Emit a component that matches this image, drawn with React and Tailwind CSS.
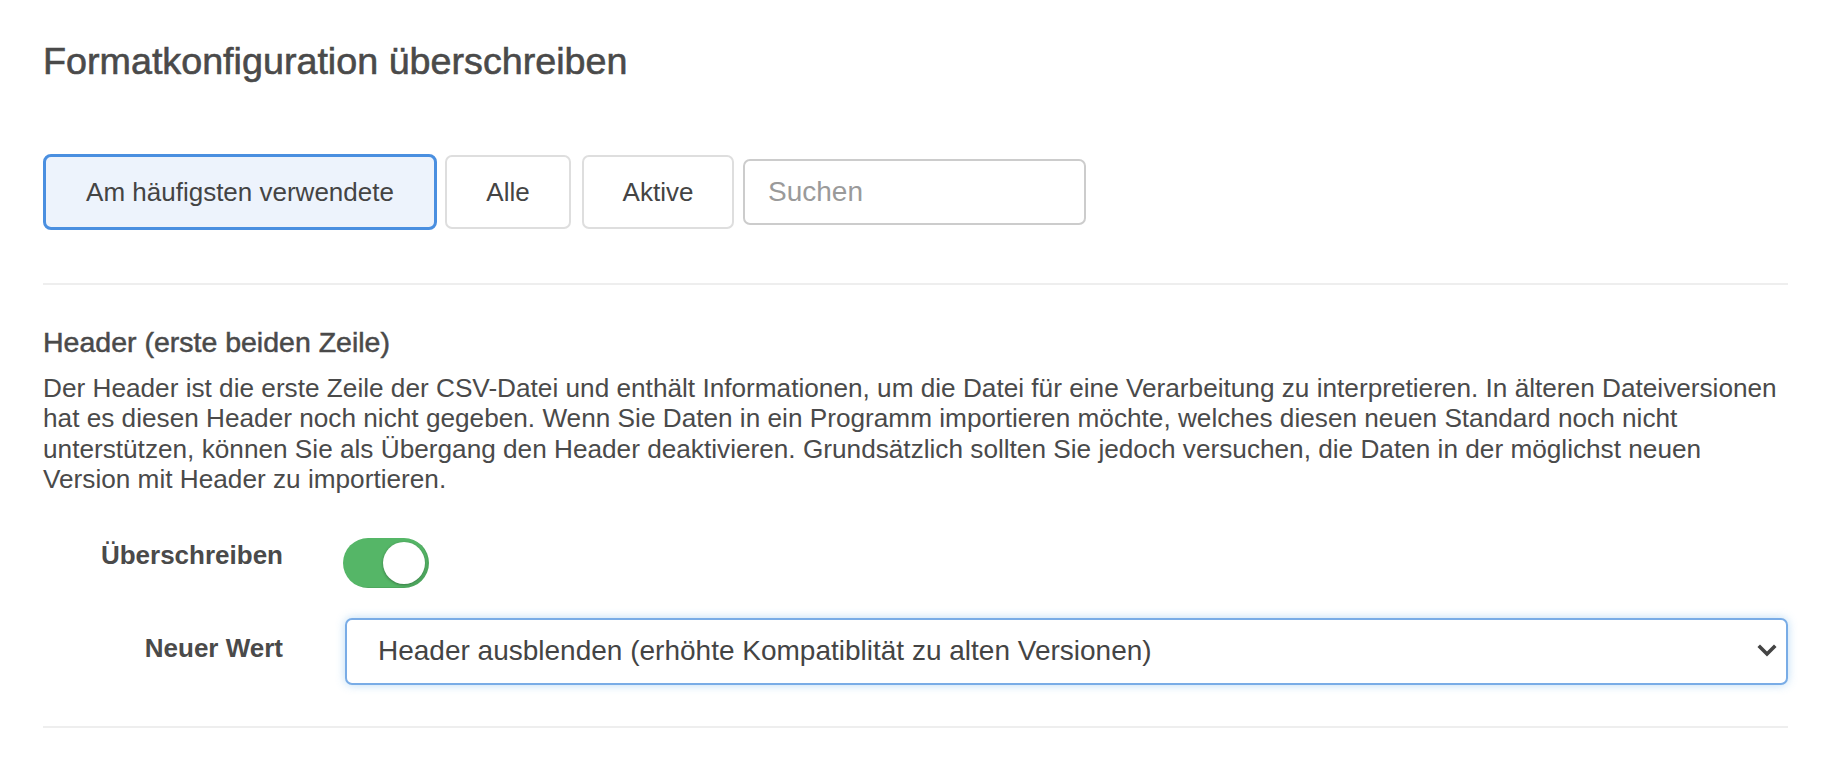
import React from "react";

export default function App() {
  return (
    <div
      className="w-full h-[758px] bg-white text-[#4a4a4a] px-[43px] pr-[44px] pt-[39px] overflow-hidden"
      style={{ fontFamily: '"Liberation Sans", Arial, sans-serif' }}
    >
      <h1 className="text-[37.7px] leading-[44px] text-[#4a4a4a] [-webkit-text-stroke:0.6px_#4a4a4a]">
        Formatkonfiguration überschreiben
      </h1>

      <div className="mt-[71px] flex items-center">
        <button className="h-[76px] w-[394px] rounded-[8px] border-[3px] border-[#4a8fe0] bg-[#edf3fc] text-[26px] text-[#444]">
          Am häufigsten verwendete
        </button>
        <button className="ml-[8px] h-[74px] w-[126px] rounded-[7px] border-2 border-[#dedede] bg-white text-[26px] text-[#444]">
          Alle
        </button>
        <button className="ml-[11px] h-[74px] w-[152px] rounded-[7px] border-2 border-[#dedede] bg-white text-[26px] text-[#444]">
          Aktive
        </button>
        <input
          placeholder="Suchen"
          className="ml-[9px] h-[66px] w-[343px] rounded-[7px] border-2 border-[#cccccc] bg-white pl-[23px] text-[28px] text-[#444] placeholder:text-[#9a9a9a] outline-none"
        />
      </div>

      <div className="mt-[53px] h-[2px] bg-[#eeeeee]" />

      <h2 className="mt-[42px] text-[28.5px] leading-[30px] text-[#4a4a4a] [-webkit-text-stroke:0.5px_#4a4a4a]">
        Header (erste beiden Zeile)
      </h2>
      <p className="mt-[16px] text-[26.2px] leading-[30.4px] text-[#4a4a4a]">
        Der Header ist die erste Zeile der CSV-Datei und enthält Informationen, um die Datei für eine Verarbeitung zu interpretieren. In älteren Dateiversionen
        <br />
        hat es diesen Header noch nicht gegeben. Wenn Sie Daten in ein Programm importieren möchte, welches diesen neuen Standard noch nicht
        <br />
        unterstützen, können Sie als Übergang den Header deaktivieren. Grundsätzlich sollten Sie jedoch versuchen, die Daten in der möglichst neuen
        <br />
        Version mit Header zu importieren.
      </p>

      <div className="mt-[43px] flex items-start">
        <div className="w-[240px] pt-[2px] text-right text-[26px] leading-[30px] font-bold text-[#4a4a4a]">Überschreiben</div>
        <div className="ml-[60px] relative h-[50px] w-[86px] rounded-full bg-[#55b667] shadow-[inset_-2px_-1px_0_rgba(0,0,0,0.08)]">
          <div className="absolute right-[4px] top-[4px] h-[42px] w-[42px] rounded-full bg-white shadow-[0_1px_3px_rgba(0,0,0,0.35)]" />
        </div>
      </div>

      <div className="mt-[30px] flex items-start">
        <div className="w-[240px] pt-[15px] text-right text-[26px] leading-[30px] font-bold text-[#4a4a4a]">Neuer Wert</div>
        <div className="ml-[62px] relative flex h-[67px] flex-1 items-center rounded-[7px] border-2 border-[#79ace6] bg-white pl-[31px] shadow-[0_0_10px_rgba(102,175,233,0.45)]">
          <span className="text-[28px] text-[#444]">Header ausblenden (erhöhte Kompatiblität zu alten Versionen)</span>
          <svg className="absolute right-[9px] top-1/2 -translate-y-1/2" width="20" height="14" viewBox="0 0 20 14">
            <path d="M3 3 L10 10 L17 3" fill="none" stroke="#444" strokeWidth="3.6" strokeLinecap="square" />
          </svg>
        </div>
      </div>

      <div className="mt-[41px] h-[2px] bg-[#eeeeee]" />
    </div>
  );
}
